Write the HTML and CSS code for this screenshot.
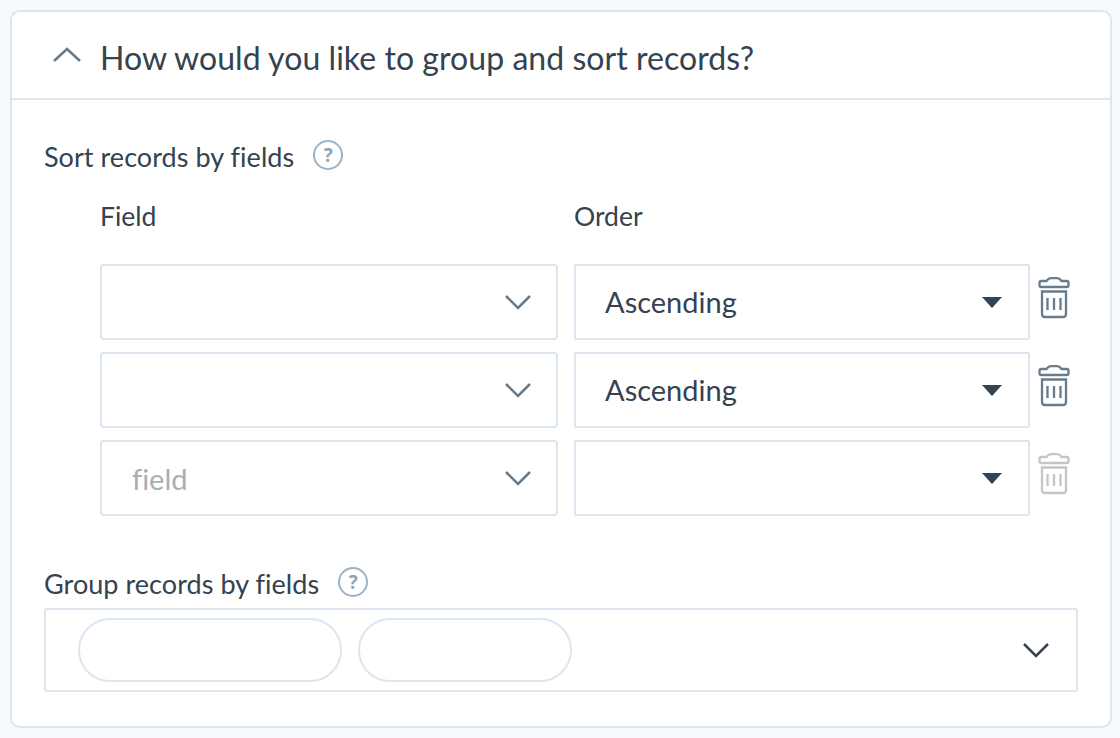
FILE: index.html
```html
<!DOCTYPE html>
<html lang="en">

<head>
    <meta charset="UTF-8" />
    <title>Group and sort records</title>
    <link rel="stylesheet" href="styles.css">
</head>

<body>
    <svg class="defs" width="0" height="0">
        <symbol id="trash" viewBox="0 0 32 42">
            <path d="M1.500 6C1.500 4.800 2.300 4 3.500 4H8.500C10 2 11 1.200 13 1.200H19C21 1.200 22 2 23.500 4H28.500C29.700 4 30.500 4.800 30.500 6V8.500C30.500 9.500 29.700 10 28.500 10H3.500C2.300 10 1.500 9.500 1.500 8.500Z" />
            <path d="M4 14.500H28V37C28 39 27 40 25 40H7C5 40 4 39 4 37Z" />
            <path d="M9.500 21V33M16 21V33M22.500 21V33" />
        </symbol>
    </svg>

    <div class="card">
        <div class="card-header">
            <svg class="chevron-up" width="30" height="16" viewBox="0 0 30 16">
                <path d="M2 14L15 2L28 14" />
            </svg>
            <h2>How would you like to group and sort records?</h2>
        </div>

        <div class="card-body">
            <div class="section-label">
                Sort records by fields
                <span class="help">?</span>
            </div>

            <div class="sort-table">
                <div class="col-label">Field</div>
                <div class="col-label">Order</div>
                <div></div>

                <div class="select">
                    <svg class="chevron" width="28" height="16" viewBox="0 0 28 16"><path d="M2 2L14 14L26 2" /></svg>
                </div>
                <div class="select order">
                    <span class="value">Ascending</span>
                    <span class="caret"></span>
                </div>
                <svg class="trash"><use href="#trash" /></svg>

                <div class="select">
                    <svg class="chevron" width="28" height="16" viewBox="0 0 28 16"><path d="M2 2L14 14L26 2" /></svg>
                </div>
                <div class="select order">
                    <span class="value">Ascending</span>
                    <span class="caret"></span>
                </div>
                <svg class="trash"><use href="#trash" /></svg>

                <div class="select">
                    <span class="placeholder">field</span>
                    <svg class="chevron" width="28" height="16" viewBox="0 0 28 16"><path d="M2 2L14 14L26 2" /></svg>
                </div>
                <div class="select order">
                    <span class="value"></span>
                    <span class="caret"></span>
                </div>
                <svg class="trash disabled"><use href="#trash" /></svg>
            </div>

            <div class="section-label group-label">
                Group records by fields
                <span class="help">?</span>
            </div>

            <div class="group-box">
                <div class="pill pill-wide"></div>
                <div class="pill"></div>
                <svg class="chevron dark" width="28" height="16" viewBox="0 0 28 16"><path d="M2 2L14 14L26 2" /></svg>
            </div>
        </div>
    </div>
</body>

</html>
```

FILE: styles.css
```css
body {
    margin: 0;
    padding: 10px 8px 10px 10px;
    background: #f7f9fd;
    color: #35424f;
    font-family: "Lato", "Open Sans", sans-serif;
    font-variant-ligatures: none;
}

.defs {
    position: absolute;
}

.card {
    height: 718px;
    box-sizing: border-box;
    background: #fff;
    border: 2px solid #dbe6f0;
    border-radius: 10px;
}

.card-header {
    display: flex;
    align-items: center;
    height: 88px;
    box-sizing: border-box;
    padding: 6px 0 0 40px;
    border-bottom: 2px solid #dbe6f0;
}

.card-header h2 {
    margin: 0 0 0 18px;
    padding-bottom: 2px;
    font-size: 32px;
    font-weight: 400;
    letter-spacing: 0.05px;
}

.chevron-up {
    margin-bottom: 6px;
}

.chevron-up path {
    fill: none;
    stroke: #667b8c;
    stroke-width: 2.5;
}

.card-body {
    padding: 0 32px;
}

.section-label {
    display: flex;
    align-items: center;
    height: 34px;
    padding-bottom: 2px;
    margin-top: 39px;
    font-size: 27px;
    letter-spacing: 0.05px;
}

.help {
    display: inline-block;
    width: 26px;
    height: 26px;
    margin-left: 19px;
    margin-bottom: 2px;
    border: 2px solid #9db2c6;
    border-radius: 50%;
    color: #8fa5ba;
    font-family: "Open Sans", sans-serif;
    font-size: 19px;
    font-weight: 700;
    line-height: 26px;
    text-align: center;
}

.sort-table {
    display: grid;
    grid-template-columns: 458px 456px 32px;
    column-gap: 16px;
    row-gap: 12px;
    margin-left: 56px;
}

.sort-table .trash {
    margin-left: -8px;
}

.col-label {
    display: flex;
    align-items: center;
    height: 34px;
    padding-bottom: 2px;
    margin-top: 24px;
    margin-bottom: 17px;
    font-size: 26.5px;
}

.select {
    display: flex;
    align-items: center;
    justify-content: space-between;
    height: 76px;
    box-sizing: border-box;
    padding: 0 24px 0 30px;
    border: 2px solid #dbe6f0;
    border-radius: 4px;
    font-size: 29px;
}

.select .chevron {
    margin-left: auto;
}

.order {
    padding: 0 26px 0 29px;
    border-radius: 2px;
}

.value {
    padding-bottom: 2px;
}

.chevron path {
    fill: none;
    stroke: #667b8c;
    stroke-width: 2.5;
}

.chevron.dark path {
    stroke: #35424f;
}

.placeholder {
    color: #a9aeb3;
}

.caret {
    width: 0;
    height: 0;
    border-left: 10px solid transparent;
    border-right: 10px solid transparent;
    border-top: 11px solid #35424f;
}

.trash {
    align-self: start;
    width: 32px;
    height: 42px;
    margin-top: 13px;
    fill: none;
    stroke: #667b8c;
    stroke-width: 2.3;
}

.trash.disabled {
    stroke: #c3c5c7;
}

.group-label {
    margin-top: 50px;
    margin-bottom: 6px;
}

.group-box {
    display: flex;
    align-items: center;
    gap: 16px;
    height: 84px;
    box-sizing: border-box;
    padding: 0 26px 0 32px;
    border: 2px solid #dbe6f0;
    border-radius: 3px;
}

.pill {
    width: 214px;
    height: 64px;
    box-sizing: border-box;
    border: 2px solid #dbe6f0;
    border-radius: 32px;
}

.pill-wide {
    width: 264px;
}

.group-box .chevron {
    margin-left: auto;
}
```
